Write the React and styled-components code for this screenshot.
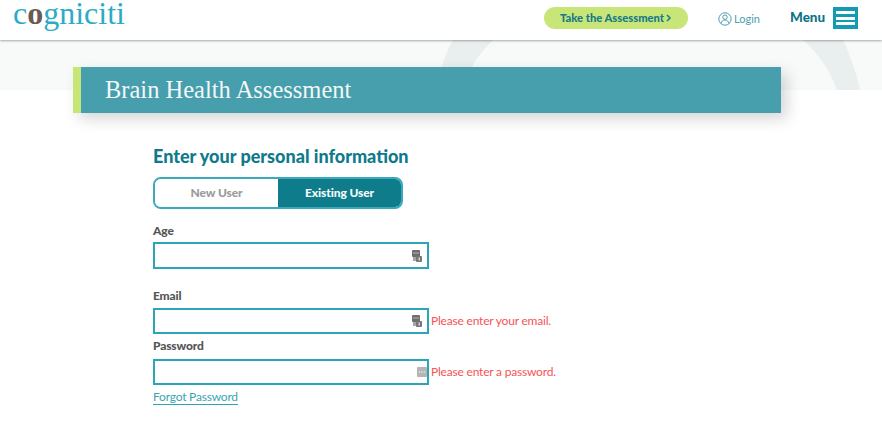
import styled, { createGlobalStyle } from "styled-components";

const GlobalStyle = createGlobalStyle`
  * {
    box-sizing: border-box;
  }
  body {
    margin: 0;
    background: #fff;
    font-family: "Lato", "Liberation Sans", sans-serif;
  }
`;

const Page = styled.div`
  width: 882px;
  height: 427px;
  overflow: hidden;
`;

const Header = styled.header`
  position: relative;
  z-index: 2;
  height: 40px;
  padding: 0 24px 0 13px;
  display: flex;
  align-items: flex-start;
  background: #fff;
  box-shadow: 0 1px 2px rgba(0, 0, 0, 0.32);
`;

const Logo = styled.div`
  font-family: "Liberation Serif", serif;
  font-size: 32px;
  line-height: 26px;
  color: #2cacc4;
  margin-right: auto;
`;

const LogoO = styled.span`
  color: #6a5a50;
  font-weight: 700;
`;

const CtaPill = styled.a`
  width: 144px;
  height: 22px;
  margin: 7px 30px 0 0;
  padding-bottom: 1px;
  border-radius: 11px;
  background: #c8e678;
  color: #17798a;
  font-size: 11.2px;
  font-weight: 900;
  display: flex;
  align-items: center;
  justify-content: center;
  gap: 2px;
`;

const LoginLink = styled.a`
  width: 41px;
  display: flex;
  align-items: center;
  gap: 2px;
  margin: 12px 31px 0 0;
  font-size: 11px;
  line-height: 14px;
  color: #4a9fb0;

  svg {
    flex-shrink: 0;
  }
`;

const MenuLabel = styled.span`
  width: 34px;
  margin: 9px 9px 0 0;
  font-size: 13.5px;
  line-height: 17px;
  font-weight: 900;
  color: #0f7486;
`;

const MenuButton = styled.button`
  width: 25px;
  height: 22px;
  margin-top: 7px;
  padding: 4px 3px;
  border: 0;
  background: #129cb2;
  display: flex;
  flex-direction: column;
  justify-content: space-between;
`;

const MenuBar = styled.span`
  display: block;
  height: 3px;
  background: #fff;
`;

const Hero = styled.section`
  position: relative;
  height: 50px;
  padding: 27px 101px 0 73px;
  background: #f8f9f9;
`;

const HeroArcs = styled.svg`
  position: absolute;
  left: 0;
  top: 0;
`;

const Banner = styled.div`
  position: relative;
  height: 46px;
  padding-left: 24px;
  display: flex;
  align-items: center;
  border-left: 8px solid #c8e678;
  background: rgba(64, 154, 170, 0.96);
  box-shadow: 6px 6px 14px rgba(0, 0, 0, 0.16);
  background-clip: padding-box;
`;

const BannerTitle = styled.h1`
  margin: 0;
  font-family: "Liberation Serif", serif;
  font-size: 24.5px;
  font-weight: 400;
  color: #f2f8f8;
`;

const Main = styled.main`
  padding: 55px 0 0 153px;
`;

const FormTitle = styled.h2`
  margin: 0 0 9px;
  font-size: 18px;
  line-height: 23px;
  font-weight: 900;
  color: #0f7a8c;
`;

const Toggle = styled.div`
  width: 250px;
  height: 32px;
  margin-bottom: 14px;
  display: grid;
  grid-template-columns: 1fr 1fr;
  border: 2px solid #3aa9bb;
  border-radius: 8px;
  overflow: hidden;
`;

const ToggleOption = styled.button`
  border: 0;
  padding: 0 0 2px;
  font-family: inherit;
  font-size: 12px;
  letter-spacing: -0.1px;
  font-weight: 900;
  background: ${(props) => (props.$active ? "#0f7c8c" : "#fff")};
  color: ${(props) => (props.$active ? "#f4fafa" : "#9a9a9a")};
`;

const Field = styled.div`
  margin-bottom: ${(props) => props.$gap}px;
`;

const Label = styled.label`
  display: block;
  margin-bottom: ${(props) => props.$gap}px;
  font-size: 12px;
  letter-spacing: -0.15px;
  line-height: 15px;
  font-weight: 900;
  color: #555;
`;

const InputRow = styled.div`
  display: flex;
  align-items: center;
  gap: 2px;
`;

const InputBox = styled.div`
  width: 276px;
  height: ${(props) => props.$height}px;
  padding-right: ${(props) => props.$inset}px;
  display: flex;
  align-items: center;
  justify-content: flex-end;
  border: 2px solid #2ba5b8;
  background: #fff;
`;

const ErrorText = styled.span`
  padding-bottom: 2px;
  font-size: 12px;
  letter-spacing: -0.2px;
  color: #f75355;
`;

const ForgotLink = styled.a`
  display: inline-block;
  font-size: 12px;
  letter-spacing: -0.2px;
  line-height: 15px;
  color: #3aa3b5;
  border-bottom: 1px solid #2ba5b8;
`;

function LoginIcon() {
  return (
    <svg width="14" height="14" viewBox="0 0 14 14" fill="none" stroke="#4a9fb0" strokeWidth="1">
      <circle cx="7" cy="7" r="6.2" />
      <circle cx="7" cy="5.2" r="2.2" />
      <path d="M3 11.4C3.6 9.2 5 8 7 8s3.4 1.2 4 3.4" />
    </svg>
  );
}

function AutofillCardIcon() {
  return (
    <svg width="10" height="12" viewBox="0 0 10 12">
      <rect width="8" height="7" rx="1" fill="#6e6e6e" />
      <path d="M1.5 3h1M3.5 3h1M5.5 3h1" stroke="#fff" strokeWidth="1" />
      <rect x="1" y="7" width="6" height="4" fill="#a5a5a5" />
      <rect x="4" y="6" width="6" height="6" rx="1" fill="#777" />
      <path d="M7.2 7.5v3" stroke="#fff" strokeWidth="1" />
    </svg>
  );
}

function AutofillKeyIcon() {
  return (
    <svg width="10" height="10" viewBox="0 0 10 10">
      <rect width="10" height="10" rx="1" fill="#b5b5b5" />
      <path d="M1.8 5h1.4M4.3 5h1.4M6.8 5h1.4" stroke="#fff" strokeWidth="1.2" />
    </svg>
  );
}

function App() {
  return (
    <>
      <GlobalStyle />
      <Page>
        <Header>
          <Logo>
            c<LogoO>o</LogoO>gniciti
          </Logo>
          <CtaPill>
            Take the Assessment
            <svg width="6" height="8" viewBox="0 0 6 8" fill="none" stroke="#17798a" strokeWidth="1.5">
              <path d="M1 1l3 3-3 3" />
            </svg>
          </CtaPill>
          <LoginLink>
            <LoginIcon />
            Login
          </LoginLink>
          <MenuLabel>Menu</MenuLabel>
          <MenuButton aria-label="Menu">
            <MenuBar />
            <MenuBar />
            <MenuBar />
          </MenuButton>
        </Header>
        <Hero>
          <HeroArcs width="882" height="50" viewBox="0 0 882 50" fill="#e9eeee">
            <path d="M453 0H493C476 16 468 32 463 50H437C439 32 445 15 453 0Z" />
            <path d="M803 0H843C850 15 856 32 860 50H837C830 30 818 13 803 0Z" />
          </HeroArcs>
          <Banner>
            <BannerTitle>Brain Health Assessment</BannerTitle>
          </Banner>
        </Hero>
        <Main>
          <FormTitle>Enter your personal information</FormTitle>
          <Toggle>
            <ToggleOption>New User</ToggleOption>
            <ToggleOption $active>Existing User</ToggleOption>
          </Toggle>
          <Field $gap={19}>
            <Label $gap={4}>Age</Label>
            <InputBox $height={27} $inset={5}>
              <AutofillCardIcon />
            </InputBox>
          </Field>
          <Field $gap={4}>
            <Label $gap={5}>Email</Label>
            <InputRow>
              <InputBox $height={26} $inset={5}>
                <AutofillCardIcon />
              </InputBox>
              <ErrorText>Please enter your email.</ErrorText>
            </InputRow>
          </Field>
          <Field $gap={0}>
            <Label $gap={6}>Password</Label>
            <InputRow>
              <InputBox $height={26} $inset={0}>
                <AutofillKeyIcon />
              </InputBox>
              <ErrorText>Please enter a password.</ErrorText>
            </InputRow>
          </Field>
          <ForgotLink>Forgot Password</ForgotLink>
        </Main>
      </Page>
    </>
  );
}

export default App;
